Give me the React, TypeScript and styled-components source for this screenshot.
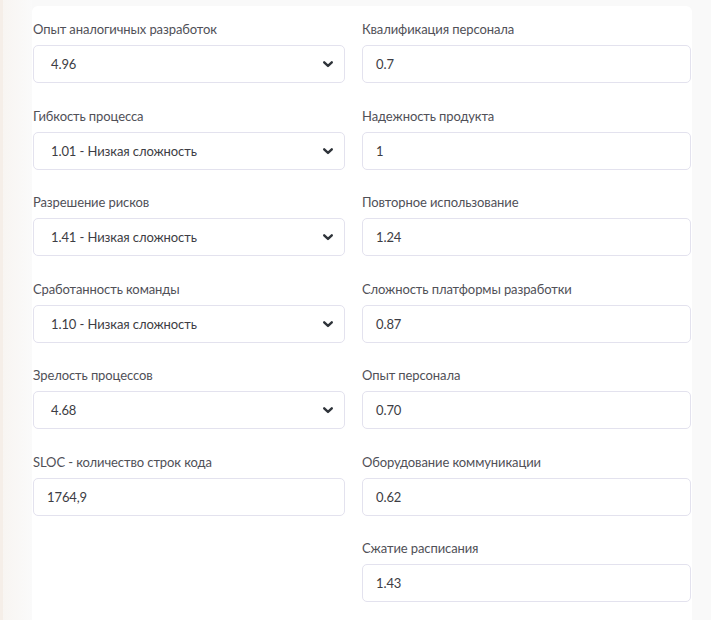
import React from "react";
import styled, { createGlobalStyle } from "styled-components";

const Global = createGlobalStyle`
  html, body { margin: 0; padding: 0; background: #f9f9f9; }
  body { font-family: Lato, "Noto Sans", sans-serif; }
  * { box-sizing: border-box; }
`;

const Page = styled.div`
  display: flex;
  min-height: 620px;
  height: 620px;
  overflow: hidden;
`;

const Strip = styled.div`
  width: 3px;
  background: #f5eee8;
  flex: none;
`;

const Gutter = styled.div`
  width: 29px;
  flex: none;
  background: linear-gradient(90deg, #f8f5f2 0%, #fafafa 100%);
`;

const Main = styled.div`
  flex: 1;
  padding: 6px 19px 0 0;
  background: #f9f9f9;
`;

const Card = styled.div`
  background: #ffffff;
  border-radius: 6px 6px 0 0;
  padding: 13px 1px 0 1px;
  min-height: 700px;
`;

const Grid = styled.div`
  display: grid;
  grid-template-columns: 1fr 1fr;
`;

const Column = styled.div<{ $gapRight?: number }>`
  display: flex;
  flex-direction: column;
  padding-right: ${(p) => p.$gapRight ?? 0}px;
`;

const Field = styled.div`
  height: 86.5px;
  display: flex;
  flex-direction: column;
`;

const Label = styled.label`
  font-size: 13px;
  line-height: 20px;
  height: 20px;
  color: #505057;
  margin-bottom: 6px;
  white-space: nowrap;
  letter-spacing: -0.1px;
`;

const Box = styled.div`
  position: relative;
  height: 38px;
  border: 1px solid #e3e2ee;
  border-radius: 5px;
  background: #fff;
  display: flex;
  align-items: center;
`;

const Value = styled.span<{ $select?: boolean }>`
  font-size: 13px;
  color: #3d3d44;
  letter-spacing: -0.1px;
  padding-left: ${(p) => (p.$select ? 17 : 13)}px;
`;

const Chevron = styled.svg`
  position: absolute;
  right: 9px;
  top: 50%;
  transform: translateY(-50%);
`;

type F = { label: string; value: string; select?: boolean };

const left: F[] = [
  { label: "Опыт аналогичных разработок", value: "4.96", select: true },
  { label: "Гибкость процесса", value: "1.01 - Низкая сложность", select: true },
  { label: "Разрешение рисков", value: "1.41 - Низкая сложность", select: true },
  { label: "Сработанность команды", value: "1.10 - Низкая сложность", select: true },
  { label: "Зрелость процессов", value: "4.68", select: true },
  { label: "SLOC - количество строк кода", value: "1764,9" },
];

const right: F[] = [
  { label: "Квалификация персонала", value: "0.7" },
  { label: "Надежность продукта", value: "1" },
  { label: "Повторное использование", value: "1.24" },
  { label: "Сложность платформы разработки", value: "0.87" },
  { label: "Опыт персонала", value: "0.70" },
  { label: "Оборудование коммуникации", value: "0.62" },
  { label: "Сжатие расписания", value: "1.43" },
];

function FieldView({ f }: { f: F }) {
  return (
    <Field>
      <Label>{f.label}</Label>
      <Box>
        <Value $select={f.select}>{f.value}</Value>
        {f.select && (
          <Chevron width="14" height="14" viewBox="0 0 14 14">
            <path d="M3.2 5.3 L7 8.9 L10.8 5.3" fill="none" stroke="#2f343a" strokeWidth="2.4" strokeLinecap="round" strokeLinejoin="round" />
          </Chevron>
        )}
      </Box>
    </Field>
  );
}

export default function App() {
  return (
    <>
      <Global />
      <Page>
        <Strip />
        <Gutter />
        <Main>
          <Card>
            <Grid>
              <Column $gapRight={17}>
                {left.map((f) => (
                  <FieldView key={f.label} f={f} />
                ))}
              </Column>
              <Column>
                {right.map((f) => (
                  <FieldView key={f.label} f={f} />
                ))}
              </Column>
            </Grid>
          </Card>
        </Main>
      </Page>
    </>
  );
}
